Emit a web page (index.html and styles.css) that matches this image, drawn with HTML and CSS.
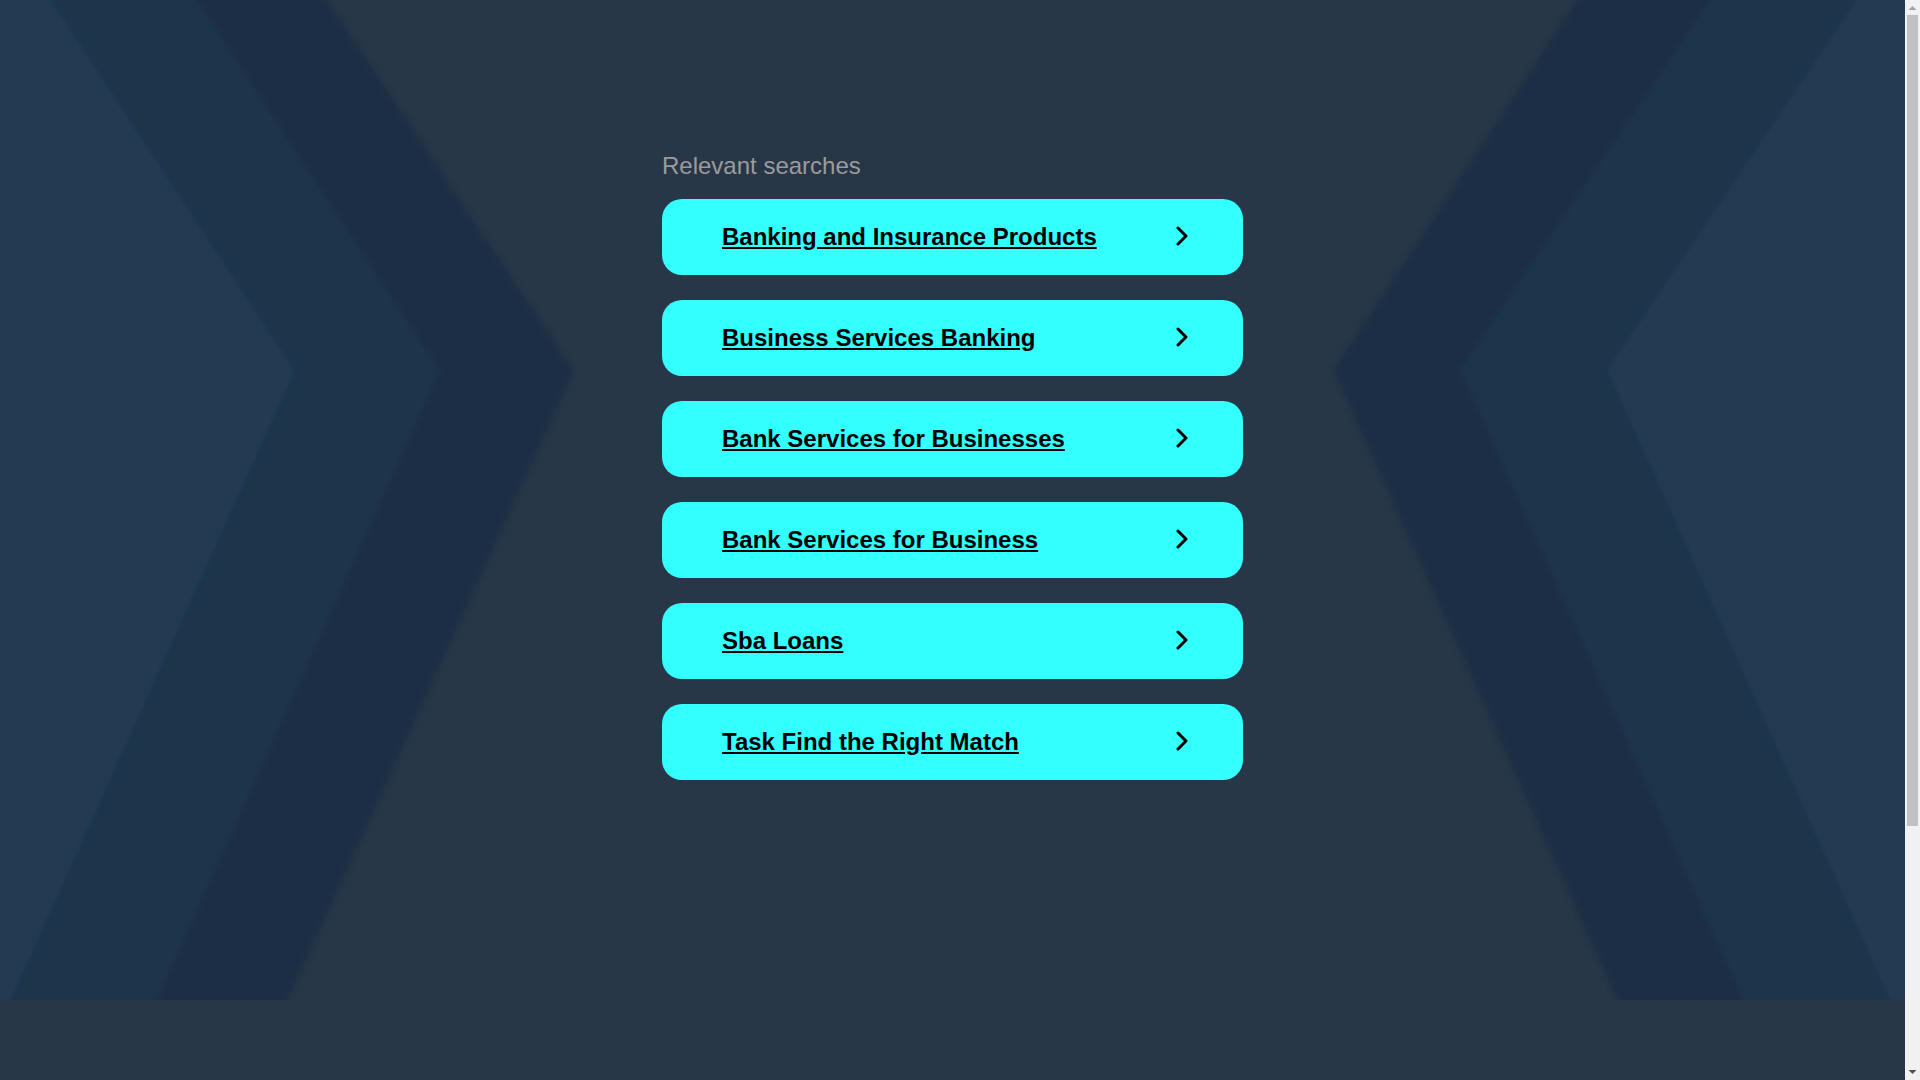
FILE: index.html
```html
<!DOCTYPE html>
<html lang="en">
<head>
<meta charset="utf-8">
<title>Relevant searches</title>
<link rel="stylesheet" href="styles.css">
</head>
<body>
<div class="page">
  <div class="hero">
    <svg class="hero-bg" viewBox="0 0 1905 1000" preserveAspectRatio="none" aria-hidden="true">
      <defs>
        <filter id="soft" x="-5%" y="-5%" width="110%" height="110%">
          <feGaussianBlur stdDeviation="2.5"/>
        </filter>
      </defs>
      <g filter="url(#soft)">
        <polygon class="band1" points="-20,-20 38,-20 295,371 2,1020 -20,1020"/>
        <polygon class="band2" points="38,-20 184,-20 440,371 148,1020 2,1020 295,371"/>
        <polygon class="band3" points="184,-20 314,-20 574,371 279,1020 148,1020 440,371"/>
        <polygon class="band3" points="1590,-20 1723,-20 1460,370 1752,1020 1626,1020 1333,370"/>
        <polygon class="band2" points="1723,-20 1870,-20 1607,370 1899,1020 1752,1020 1460,370"/>
        <polygon class="band1" points="1870,-20 1925,-20 1925,1020 1899,1020 1607,370"/>
      </g>
    </svg>
    <main class="content">
      <h2 class="heading">Relevant searches</h2>
      <ul class="results">
        <li class="result"><a class="result-link" href="#">Banking and Insurance Products</a><svg class="chev" viewBox="0 0 12 20" aria-hidden="true"><polyline points="2,2 10,10 2,18"/></svg></li>
        <li class="result"><a class="result-link" href="#">Business Services Banking</a><svg class="chev" viewBox="0 0 12 20" aria-hidden="true"><polyline points="2,2 10,10 2,18"/></svg></li>
        <li class="result"><a class="result-link" href="#">Bank Services for Businesses</a><svg class="chev" viewBox="0 0 12 20" aria-hidden="true"><polyline points="2,2 10,10 2,18"/></svg></li>
        <li class="result"><a class="result-link" href="#">Bank Services for Business</a><svg class="chev" viewBox="0 0 12 20" aria-hidden="true"><polyline points="2,2 10,10 2,18"/></svg></li>
        <li class="result"><a class="result-link" href="#">Sba Loans</a><svg class="chev" viewBox="0 0 12 20" aria-hidden="true"><polyline points="2,2 10,10 2,18"/></svg></li>
        <li class="result"><a class="result-link" href="#">Task Find the Right Match</a><svg class="chev" viewBox="0 0 12 20" aria-hidden="true"><polyline points="2,2 10,10 2,18"/></svg></li>
      </ul>
    </main>
  </div>
  <footer class="footer"></footer>
</div>
<div class="scrollbar" aria-hidden="true">
  <svg class="sb-arrow" viewBox="0 0 15 15"><polygon class="sb-up" points="3.5,10 7.5,6 11.5,10"/></svg>
  <div class="sb-track"><div class="sb-thumb"></div></div>
  <svg class="sb-arrow" viewBox="0 0 15 15"><polygon class="sb-down" points="3.5,5 7.5,9 11.5,5"/></svg>
</div>
</body>
</html>
```

FILE: styles.css
```css
html, body {
  margin: 0;
  padding: 0;
}

body {
  background: #283747;
  font-family: "Liberation Sans", Arial, sans-serif;
  display: flex;
  align-items: flex-start;
}

.page {
  flex: 1 1 auto;
  min-width: 0;
}

.hero {
  position: relative;
  height: 1000px;
  overflow: hidden;
}

.hero-bg {
  position: absolute;
  left: 0;
  top: 0;
  width: 100%;
  height: 1000px;
  display: block;
}

.band1 { fill: #203a52; }
.band2 { fill: #1e344c; }
.band3 { fill: #1b2f45; }

.content {
  position: relative;
  width: 581px;
  margin: 0 auto;
  padding-top: 152px;
}

.heading {
  margin: 0 0 20px 0;
  font-size: 24px;
  font-weight: normal;
  line-height: 27px;
  color: #9b9b9b;
}

.results {
  list-style: none;
  margin: 0;
  padding: 0;
  display: flex;
  flex-direction: column;
  gap: 25px;
}

.result {
  height: 76px;
  box-sizing: border-box;
  background: #33ffff;
  border-radius: 20px;
  display: flex;
  align-items: center;
  justify-content: space-between;
  padding: 0 55px 2px 60px;
}

.result-link {
  color: #000;
  font-size: 24px;
  font-weight: bold;
  line-height: 27px;
  text-decoration: underline;
  text-underline-offset: 2px;
}

.chev {
  width: 12px;
  height: 20px;
  display: block;
}

.chev polyline {
  fill: none;
  stroke: #000;
  stroke-width: 3;
  stroke-linecap: round;
  stroke-linejoin: round;
}

.footer {
  height: 398px;
  background: #283747;
}

.scrollbar {
  flex: 0 0 15px;
  width: 15px;
  height: 100vh;
  position: sticky;
  top: 0;
  background: #f1f1f1;
  display: flex;
  flex-direction: column;
}

.sb-arrow {
  width: 15px;
  height: 15px;
  display: block;
  flex: 0 0 15px;
}

.sb-up { fill: #a3a3a3; }
.sb-down { fill: #505050; }

.sb-track {
  flex: 1 1 auto;
  padding: 0 2px;
}

.sb-thumb {
  height: 811px;
  background: #c1c1c1;
}
```
